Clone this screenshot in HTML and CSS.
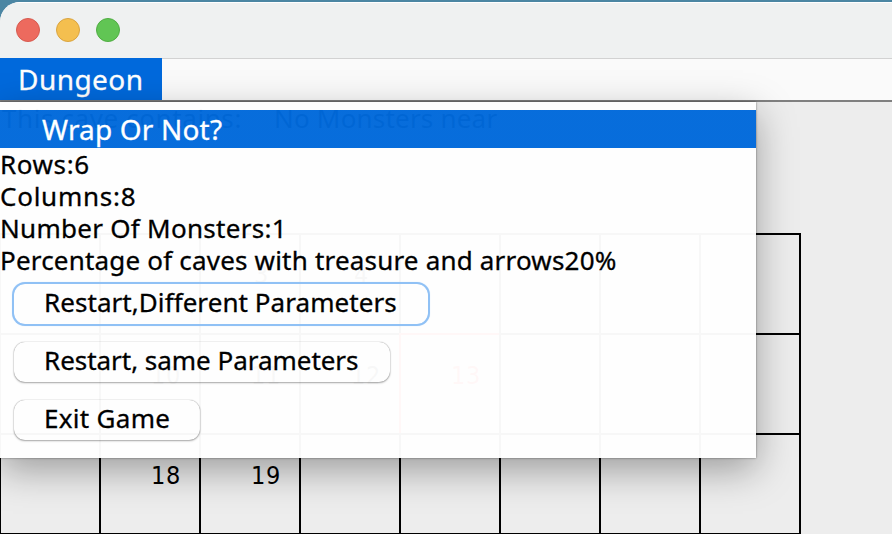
FILE: index.html
```html
<!DOCTYPE html>
<html lang="en">
<head>
<meta charset="utf-8">
<title>Dungeon</title>
<link rel="stylesheet" href="styles.css">
</head>
<body>
<div class="window">
  <header class="titlebar">
    <span class="light close"></span><span class="light minimize"></span><span class="light zoom"></span>
  </header>
  <nav class="menubar"><span class="menu-title">Dungeon</span></nav>
  <main class="content">
    <div class="status"><span class="contains">This cave contains:</span><span class="near">No Monsters near</span></div>
    <div class="board">
      <div class="cell"></div><div class="cell"></div><div class="cell high">3</div><div class="cell high">4</div><div class="cell"></div><div class="cell"></div><div class="cell"></div><div class="cell"></div>
      <div class="cell"></div><div class="cell">10</div><div class="cell">11</div><div class="cell">12</div><div class="cell current">13</div><div class="cell"></div><div class="cell"></div><div class="cell"></div>
      <div class="cell"></div><div class="cell">18</div><div class="cell">19</div><div class="cell"></div><div class="cell"></div><div class="cell"></div><div class="cell"></div><div class="cell"></div>
    </div>
  </main>
  <div class="popup">
    <div class="item">Wrap Or Not?</div>
    <div class="label rows">Rows:6</div>
    <div class="label columns">Columns:8</div>
    <div class="label monsters">Number Of Monsters:1</div>
    <div class="label percent">Percentage of caves with treasure and arrows20%</div>
    <button class="button different">Restart,Different Parameters</button>
    <button class="button same">Restart, same Parameters</button>
    <button class="button exit">Exit Game</button>
  </div>
</div>
</body>
</html>
```
FILE: styles.css
```css
* { box-sizing: border-box; }
body {
  margin: 0;
  width: 892px;
  height: 534px;
  overflow: hidden;
  padding-top: 2px;
  background: #4b86a3;
  font-family: "Noto Sans", "Open Sans", sans-serif;
  font-size: 26px;
  color: #000;
}
.window {
  position: relative;
  height: 532px;
  overflow: hidden;
  border-top-left-radius: 20px;
  background: #ededed;
}
.titlebar {
  display: flex;
  gap: 16px;
  height: 57px;
  padding: 15px 16px;
  border-top: 1px solid #fff;
  border-bottom: 1px solid #d2d2d2;
  background: #eff1f1;
}
.light { width: 24px; height: 24px; border-radius: 50%; border: 1px solid; }
.close { background: #ed6a5e; border-color: #d65b50; }
.minimize { background: #f4bf4f; border-color: #d9a441; }
.zoom { background: #61c554; border-color: #50ad43; }
.menubar {
  display: flow-root;
  height: 43px;
  border-bottom: 2px solid #808080;
  background: #fafafa;
}
.menu-title {
  display: block;
  width: 162px;
  height: 42px;
  margin-top: -1px;
  padding-left: 18px;
  background: #0069dc;
  color: #fff;
  font-size: 28px;
  line-height: 43px;
  letter-spacing: .45px;
  -webkit-text-stroke: .3px;
}
.status { display: flex; height: 131px; line-height: 33px; }
.contains { width: 274px; padding-left: 2px; letter-spacing: .6px; }
.near { letter-spacing: .2px; }
.board {
  display: grid;
  grid-template-columns: repeat(8, 100px);
  grid-auto-rows: 100px;
  width: 802px;
  height: 302px;
  margin-left: -1px;
  border: solid #000;
  border-width: 0 2px 2px 0;
}
.cell {
  border: solid #000;
  border-width: 2px 0 0 2px;
  padding: 22px 0 0 50px;
  font: 25px/38px "DejaVu Sans Condensed", "DejaVu Sans", sans-serif;
  letter-spacing: .6px;
}
.high { padding: 21px 0 0 53px; }
.current { color: red; border-color: red; }
.popup {
  position: absolute;
  left: 0;
  top: 100px;
  width: 756px;
  height: 356px;
  padding-top: 8px;
  display: flex;
  flex-direction: column;
  align-items: flex-start;
  background: linear-gradient(rgba(255, 255, 255, .97) 8px, rgba(0, 105, 219, .97) 8px 46px, rgba(255, 255, 255, .97) 46px);
  box-shadow: 0 0 2px rgba(0, 0, 0, .5), 0 12px 36px rgba(0, 0, 0, .34);
}
.item {
  width: 100%;
  height: 38px;
  padding-left: 42px;
  color: #fff;
  font-size: 28px;
  line-height: 39px;
  letter-spacing: .17px;
  -webkit-text-stroke: .3px;
}
.label { height: 32px; line-height: 32px; white-space: nowrap; -webkit-text-stroke: .3px; }
.rows { letter-spacing: .6px; }
.columns { letter-spacing: .75px; }
.monsters { letter-spacing: .28px; }
.percent { letter-spacing: .19px; }
.button {
  height: 40px;
  margin: 9px 0 9px 14px;
  padding: 0 0 4px 30px;
  border: 0;
  border-radius: 11px;
  background: transparent;
  box-shadow: 0 0 1px rgba(0, 0, 0, .45), 0 1px 2px rgba(0, 0, 0, .32);
  font: 26px/36px "Noto Sans", "Open Sans", sans-serif;
  color: #000;
  text-align: left;
  white-space: nowrap;
  -webkit-text-stroke: .3px;
}
.different { width: 414px; margin-top: 8px; letter-spacing: .06px; box-shadow: 0 0 0 2px #90c1f5, 0 0 2px 1px #90c1f5; }
.same { width: 376px; letter-spacing: -.03px; }
.exit { width: 186px; letter-spacing: .3px; }
```
